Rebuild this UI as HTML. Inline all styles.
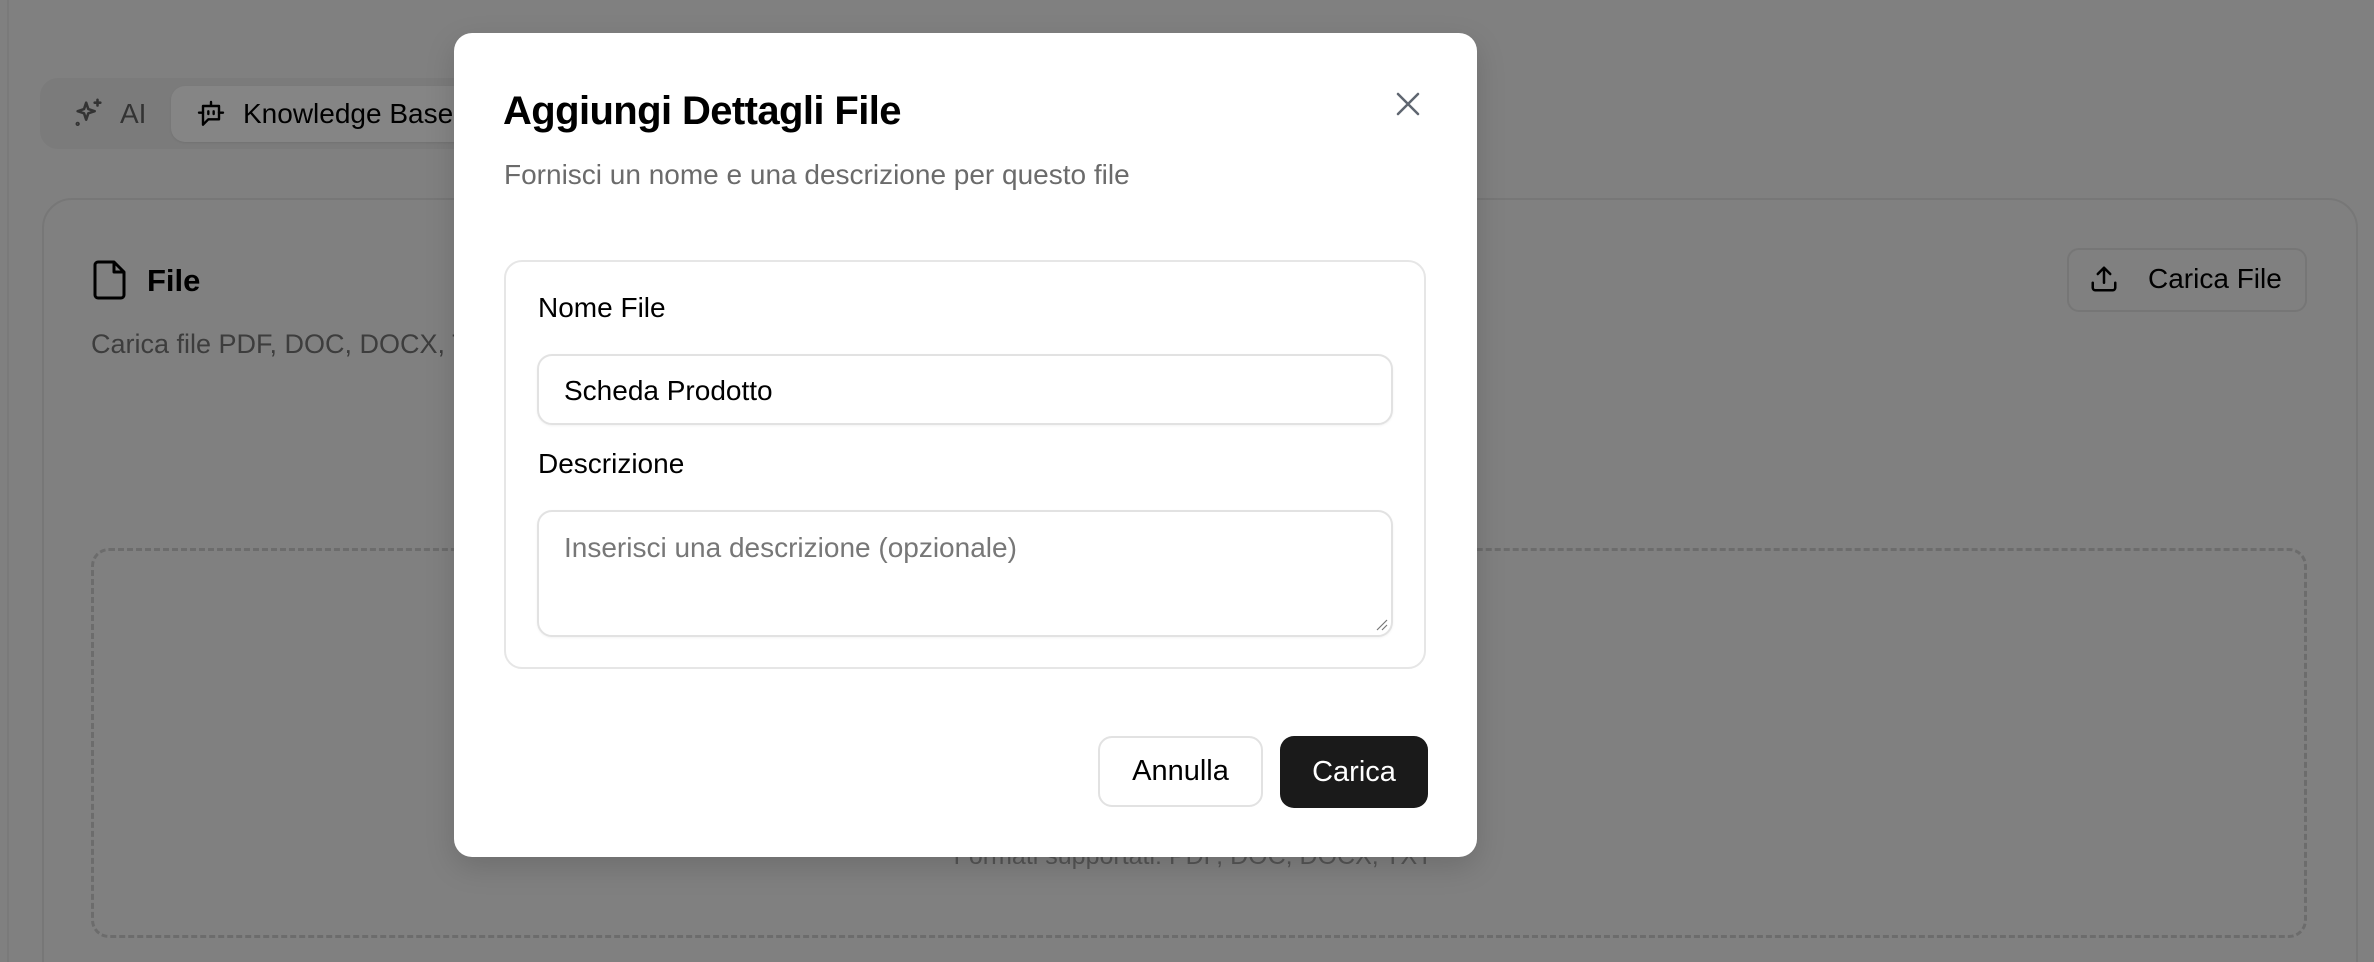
<!DOCTYPE html>
<html style="width:2374px;height:962px;overflow:hidden"><head><meta charset="utf-8"><style>
*{box-sizing:border-box;margin:0;padding:0}
body{width:2374px;height:962px;overflow:hidden;background:#808080;font-family:"Liberation Sans",sans-serif;position:relative}
.abs{position:absolute}
</style></head><body>
<div class="abs" style="left:7px;top:0;width:2px;height:962px;background:#7a7a7a"></div>
<!-- tabs -->
<div class="abs" style="left:40px;top:78px;width:480px;height:71px;border-radius:18px;background:#7b7b7b"></div>
<svg class="abs" style="left:72px;top:97px" width="34" height="34" viewBox="0 0 24 24" fill="none" stroke="#333" stroke-width="1.8" stroke-linecap="round" stroke-linejoin="round"><path d="M10 4l1.5 4.5L16 10l-4.5 1.5L10 16l-1.5-4.5L4 10l4.5-1.5z"/><path d="M18 2v4M16 4h4"/><circle cx="4" cy="19" r="0.6"/></svg>
<div class="abs" style="left:120px;top:97px;font-size:28px;color:#333;line-height:34px">AI</div>
<div class="abs" style="left:171px;top:86px;width:340px;height:56px;border-radius:14px;background:#858585;box-shadow:0 1px 2px rgba(0,0,0,.08)"></div>
<svg class="abs" style="left:195px;top:98px" width="32" height="32" viewBox="0 0 24 24" fill="none" stroke="#000" stroke-width="1.8" stroke-linecap="round" stroke-linejoin="round"><path d="M12 3v3M6 6h12v10H10l-4 4z"/><path d="M3 11h3M18 11h3M10 10v2M14 10v2"/></svg>
<div class="abs" style="left:243px;top:97px;font-size:28px;color:#000;line-height:34px">Knowledge Base</div>
<!-- card -->
<div class="abs" style="left:42px;top:198px;width:2316px;height:800px;border:2px solid #777;border-radius:30px;clip-path:inset(0 0 36px 0)"></div>
<svg class="abs" style="left:93px;top:260px" width="34" height="40" viewBox="0 0 17 20" fill="none" stroke="#000" stroke-width="1.5" stroke-linejoin="round"><path d="M2.5 1h8l5 5v11.5a1.5 1.5 0 0 1-1.5 1.5h-11.5a1.5 1.5 0 0 1-1.5-1.5v-15a1.5 1.5 0 0 1 1.5-1.5z"/><path d="M10.5 1v5h5"/></svg>
<div class="abs" style="left:147px;top:263px;font-size:31px;font-weight:bold;color:#000;line-height:36px">File</div>
<div class="abs" style="left:91px;top:327px;font-size:27px;color:#3d3d3d;line-height:34px;white-space:nowrap">Carica file PDF, DOC, DOCX, TXT per la knowledge base del tuo assistente AI da utilizzare nella chat di supporto.</div>
<div class="abs" style="left:2067px;top:248px;width:240px;height:64px;border:2px solid #767676;border-radius:12px"></div>
<svg class="abs" style="left:2089px;top:264px" width="30" height="30" viewBox="0 0 24 24" fill="none" stroke="#000" stroke-width="2" stroke-linecap="round" stroke-linejoin="round"><path d="M12 15V3M7 8l5-5 5 5M3 15v4a2 2 0 0 0 2 2h14a2 2 0 0 0 2-2v-4"/></svg>
<div class="abs" style="left:2148px;top:262px;font-size:28px;color:#000;line-height:34px">Carica File</div>
<div class="abs" style="left:91px;top:548px;width:2216px;height:390px;border:3px dashed #6c6c6c;border-radius:18px"></div>
<div class="abs" style="left:6px;width:2374px;top:841px;text-align:center;font-size:25px;color:#555;line-height:30px">Formati supportati: PDF, DOC, DOCX, TXT</div>
<!-- modal -->
<div class="abs" style="left:454px;top:33px;width:1023px;height:824px;background:#fff;border-radius:18px;box-shadow:0 10px 30px rgba(0,0,0,.15)">
  <div class="abs" style="left:49px;top:54px;font-size:40px;font-weight:bold;color:#000;letter-spacing:-0.6px;line-height:48px">Aggiungi Dettagli File</div>
  <div class="abs" style="left:50px;top:125px;font-size:28px;color:#6b6b6b;line-height:34px">Fornisci un nome e una descrizione per questo file</div>
  <svg class="abs" style="left:939px;top:56px" width="30" height="30" viewBox="0 0 24 24" fill="none" stroke="#5f6670" stroke-width="2" stroke-linecap="round"><path d="M4 4l16 16M20 4L4 20"/></svg>
  <div class="abs" style="left:50px;top:227px;width:922px;height:409px;border:2px solid #e6e6e6;border-radius:18px"></div>
  <div class="abs" style="left:84px;top:258px;font-size:28px;color:#000;line-height:34px">Nome File</div>
  <div class="abs" style="left:83px;top:321px;width:856px;height:71px;border:2px solid #e2e2e2;border-radius:15px;box-shadow:0 1px 2px rgba(0,0,0,.05)"></div>
  <div class="abs" style="left:110px;top:341px;font-size:28px;color:#000;line-height:34px">Scheda Prodotto</div>
  <div class="abs" style="left:84px;top:414px;font-size:28px;color:#000;line-height:34px">Descrizione</div>
  <div class="abs" style="left:83px;top:477px;width:856px;height:127px;border:2px solid #e2e2e2;border-radius:15px;box-shadow:0 1px 2px rgba(0,0,0,.05)"></div>
  <div class="abs" style="left:110px;top:498px;font-size:28px;color:#777;line-height:34px">Inserisci una descrizione (opzionale)</div>
  <svg class="abs" style="left:922px;top:586px" width="12" height="12" viewBox="0 0 12 12" stroke="#777" stroke-width="1.2"><path d="M1 11L11 1M6 11L11 6"/></svg>
  <div class="abs" style="left:644px;top:703px;width:165px;height:71px;border:2px solid #e2e2e2;border-radius:14px;text-align:center;line-height:67px;font-size:29px;color:#000">Annulla</div>
  <div class="abs" style="left:826px;top:703px;width:148px;height:72px;background:#1a1a1a;border-radius:14px;text-align:center;line-height:72px;font-size:29px;color:#fff">Carica</div>
</div>
</body></html>
